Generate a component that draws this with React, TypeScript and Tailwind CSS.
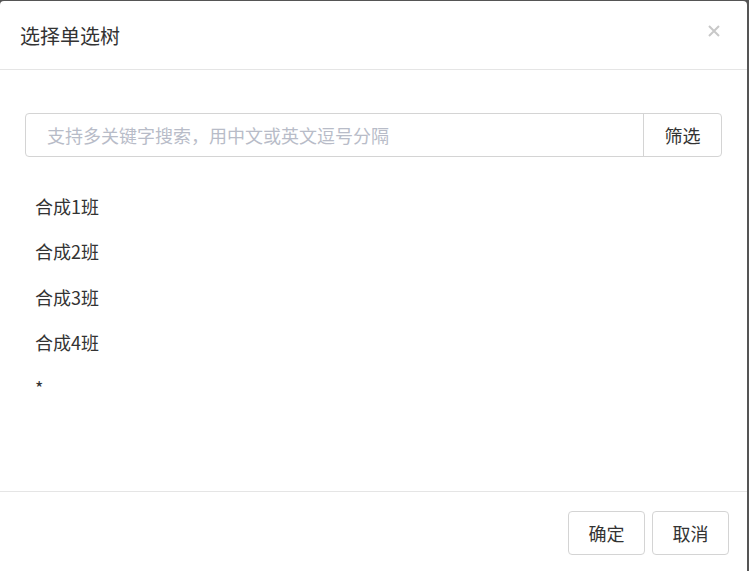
import React from 'react';

const font = { fontFamily: '"Microsoft YaHei", "Noto Sans CJK SC", "Liberation Sans", sans-serif' };

const classes = ['合成1班', '合成2班', '合成3班', '合成4班'];

export default function App() {
    return (
        <div className="w-[749px] h-[571px] bg-[#555555] pt-px pr-[2px] overflow-hidden" style={font}>
            <div className="h-full bg-white rounded-t-[4px] flex flex-col text-[#333333]">
                {/* Header */}
                <div className="h-[69px] shrink-0 border-b border-[#e5e5e5] flex items-center justify-between pl-[20px] pr-[27px] pt-[2px]">
                    <h4 className="text-[20px] leading-none">选择单选树</h4>
                    <button className="text-[#c8c8c8] -mt-[10px]">
                        <svg width="12" height="12" viewBox="0 0 12 12" fill="none" stroke="currentColor" strokeWidth="2">
                            <path d="M1 1L11 11M11 1L1 11" />
                        </svg>
                    </button>
                </div>

                {/* Body */}
                <div className="flex-1 px-[25px] pt-[43px]">
                    <div className="flex h-[44px] border border-[#d4d4d4] rounded-[4px]">
                        <input
                            className="flex-1 px-[21px] text-[18px] outline-none placeholder:text-[#b8bcc8] bg-transparent"
                            placeholder="支持多关键字搜索，用中文或英文逗号分隔"
                        />
                        <button className="w-[78px] border-l border-[#d4d4d4] text-[18px]">筛选</button>
                    </div>
                    <ul className="mt-[27px] pl-[10px] text-[18px]">
                        {classes.map(c => (
                            <li key={c} className="h-[45.3px] flex items-center">{c}</li>
                        ))}
                        <li className="h-[45px] flex items-center">*</li>
                    </ul>
                </div>

                {/* Footer */}
                <div className="h-[80px] shrink-0 border-t border-[#e5e5e5] flex justify-end items-start gap-[7px] pt-[19px] pr-[18px]">
                    <button className="w-[77px] h-[44px] border border-[#d4d4d4] rounded-[4px] text-[18px]">确定</button>
                    <button className="w-[77px] h-[44px] border border-[#d4d4d4] rounded-[4px] text-[18px]">取消</button>
                </div>
            </div>
        </div>
    );
}
